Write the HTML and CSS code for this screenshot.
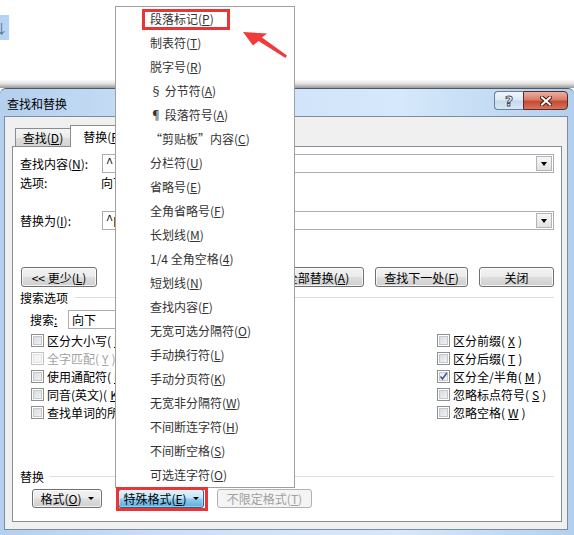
FILE: index.html
```html
<!DOCTYPE html>
<html lang="zh-CN">
<head>
<meta charset="utf-8">
<title>查找和替换</title>
<link rel="stylesheet" href="styles.css">
</head>
<body>
<div class="screen">
  <div class="doc">
    <div class="marker">↓</div>
  </div>
  <div class="shade"></div>
  <div class="dialog">
    <div class="titlebar">
      <span class="title">查找和替换</span>
      <div class="caps">
        <span class="cap help">?</span>
        <span class="cap close"><svg width="12" height="10" viewBox="0 0 12 10"><path d="M2 1.5 L10 8.5 M10 1.5 L2 8.5" stroke="#4a1a12" stroke-width="4" stroke-linecap="square"/><path d="M2 1.5 L10 8.5 M10 1.5 L2 8.5" stroke="#fff" stroke-width="2" stroke-linecap="square"/></svg></span>
      </div>
    </div>
    <div class="client">
      <div class="tabs">
        <div class="tab t1">查找(<u>D</u>)</div>
        <div class="tab active">替换(<u>P</u>)</div>
      </div>
      <div class="panel">
        <div class="field">
          <span class="lbl">查找内容(<u>N</u>):</span>
          <div class="combo"><span class="val">^l</span><span class="drop"><i></i></span></div>
        </div>
        <div class="opt"><span class="lbl lbl-o">选项:</span><span>向下</span></div>
        <div class="field field-r">
          <span class="lbl">替换为(<u>I</u>):</span>
          <div class="combo"><span class="val">^p</span><span class="drop"><i></i></span></div>
        </div>
        <div class="btnrow">
          <span class="btn b-less">&lt;&lt; 更少(<u>L</u>)</span>
          <div class="btngroup">
            <span class="btn b-w">全部替换(<u>A</u>)</span>
            <span class="btn b-w">查找下一处(<u>F</u>)</span>
            <span class="btn b-close">关闭</span>
          </div>
        </div>
        <div class="section"><span>搜索选项</span><i class="rule"></i></div>
        <div class="search"><span class="slbl">搜索<u>:</u></span><div class="select">向下</div></div>
        <div class="checks">
          <div class="col col-l">
            <label class="chk"><span class="cb"></span>区分大小写(<u>H</u>)</label>
            <label class="chk off"><span class="cb"></span>全字匹配(<u>Y</u>)</label>
            <label class="chk"><span class="cb"></span>使用通配符(<u>U</u>)</label>
            <label class="chk"><span class="cb"></span>同音(英文)(<u>K</u>)</label>
            <label class="chk"><span class="cb"></span>查找单词的所有形式(英文)(<u>W</u>)</label>
          </div>
          <div class="col">
            <label class="chk"><span class="cb"></span>区分前缀(<u>X</u>)</label>
            <label class="chk"><span class="cb"></span>区分后缀(<u>T</u>)</label>
            <label class="chk"><span class="cb on"><svg width="9" height="9" viewBox="0 0 9 9"><path d="M1.5 4.5 L3.5 7 L7.8 1" fill="none" stroke="#3a57a0" stroke-width="1.6"/></svg></span>区分全/半角(<u>M</u>)</label>
            <label class="chk"><span class="cb"></span>忽略标点符号(<u>S</u>)</label>
            <label class="chk"><span class="cb"></span>忽略空格(<u>W</u>)</label>
          </div>
        </div>
        <div class="section sec2"><span>替换</span><i class="rule"></i></div>
        <div class="fmtrow">
          <span class="btn b-fmt">格式(<u>O</u>)<b class="tri"></b></span>
          <span class="btn b-sp pressed">特殊格式(<u>E</u>)<b class="tri"></b></span>
          <span class="btn b-nl disabled">不限定格式(<u>T</u>)</span>
        </div>
      </div>
    </div>
  </div>

  <div class="menu">
    <div class="mi">段落标记(<u>P</u>)</div>
    <div class="mi">制表符(<u>T</u>)</div>
    <div class="mi">脱字号(<u>R</u>)</div>
    <div class="mi">§ 分节符(<u>A</u>)</div>
    <div class="mi">¶ 段落符号(<u>A</u>)</div>
    <div class="mi">“剪贴板”内容(<u>C</u>)</div>
    <div class="mi">分栏符(<u>U</u>)</div>
    <div class="mi">省略号(<u>E</u>)</div>
    <div class="mi">全角省略号(<u>F</u>)</div>
    <div class="mi">长划线(<u>M</u>)</div>
    <div class="mi">1/4 全角空格(<u>4</u>)</div>
    <div class="mi">短划线(<u>N</u>)</div>
    <div class="mi">查找内容(<u>F</u>)</div>
    <div class="mi">无宽可选分隔符(<u>O</u>)</div>
    <div class="mi">手动换行符(<u>L</u>)</div>
    <div class="mi">手动分页符(<u>K</u>)</div>
    <div class="mi">无宽非分隔符(<u>W</u>)</div>
    <div class="mi">不间断连字符(<u>H</u>)</div>
    <div class="mi">不间断空格(<u>S</u>)</div>
    <div class="mi">可选连字符(<u>O</u>)</div>
  </div>
  <div class="mark mark-top"></div>
  <div class="mark mark-btn"></div>
  <svg class="arrow" width="56" height="38" viewBox="236 24 56 38"><polygon points="243,32 267,33.5 262,37.5 287,55.5 285.5,58 258.5,41 253,45.5" fill="#f03b3b"/></svg>
</div>
</body>
</html>
```

FILE: styles.css
```css
* { box-sizing: border-box; margin: 0; padding: 0; }
html, body { width: 574px; height: 535px; overflow: hidden; background: #fff; }
body { font-family: "Noto Sans CJK SC", sans-serif; font-size: 12px; color: #000; }
u { text-decoration: underline; text-underline-offset: 1px; }

.screen { position: relative; width: 574px; height: 535px; overflow: hidden; }

.doc { height: 80px; display: flex; align-items: flex-start; }
.marker { margin-top: 15px; width: 9px; height: 25px; background: #b5d3f4; color: #5b6f88; font-size: 13px; line-height: 25px; overflow: hidden; text-indent: -5px; }
.shade { height: 8px; background: linear-gradient(#fbfbfb, #e2e2e2 45%, #9a9a9a); }

.dialog { height: 447px; display: flex; flex-direction: column; padding: 0 6px 5px 4px; border-top: 1px solid #4d5966; border-radius: 6px 6px 0 0; background: linear-gradient(90deg, #b4d0ee 0%, #cbe0f7 30%, #d6e8fb 70%, #b2d0ee 100%); }
.titlebar { height: 27px; flex: none; display: flex; align-items: flex-start; justify-content: space-between; }
.title { padding-left: 3px; line-height: 29px; font-size: 12px; color: #000; }
.caps { display: flex; margin-top: 2px; }
.cap { height: 19px; display: flex; align-items: center; justify-content: center; }
.help { width: 29px; border: 1px solid #6d7e93; border-right: none; border-radius: 4px 0 0 4px; background: linear-gradient(#f1f6fc, #dce8f5 48%, #c6d8ec 52%, #d9e8f7); font: bold 14px "DejaVu Sans", sans-serif; color: #fff; -webkit-text-stroke: 0.9px #3d4c60; }
.close { width: 45px; border: 1px solid #5b2a22; border-radius: 0 4px 4px 0; background: linear-gradient(#eab0a2, #d87d69 45%, #c54a33 55%, #d6745e); }

.client { flex: 1; border: 1px solid #7d8c9c; background: #f0f0f0; padding: 8px 5px 0 7px; display: flex; flex-direction: column; }

.tabs { height: 21px; flex: none; display: flex; align-items: flex-end; padding-left: 3px; position: relative; z-index: 1; }
.tab { height: 18px; border: 1px solid #898c95; border-bottom: none; background: linear-gradient(#f4f4f4, #ececec 50%, #dedede 51%, #d4d4d4); line-height: 17px; text-align: center; white-space: nowrap; }
.t1 { width: 56px; }
.tab.active { width: 66px; height: 22px; margin-bottom: -1px; margin-left: -1px; background: #fff; line-height: 21px; }

.panel { height: 376px; flex: none; border: 1px solid #898c95; background: #fff; padding: 7px 7px 0 7px; display: flex; flex-direction: column; }

.field { height: 19px; display: flex; align-items: center; }
.field-r { margin-top: 20px; }
.lbl { width: 82px; flex: none; white-space: nowrap; }
.lbl-o { width: 81px; }
.combo { flex: 1; height: 19px; border: 1px solid #abadb3; display: flex; align-items: center; justify-content: space-between; padding: 1px; }
.val { padding-left: 2px; font-family: "Liberation Mono", monospace; font-size: 12px; }
.drop { width: 16px; height: 15px; border: 1px solid #b4b4b4; background: linear-gradient(#f7f7f7, #e2e2e2); display: flex; align-items: center; justify-content: center; }
.drop i { width: 0; height: 0; border-left: 3px solid transparent; border-right: 3px solid transparent; border-top: 4px solid #000; }

.opt { height: 18px; display: flex; align-items: center; white-space: nowrap; }

.btnrow { margin-top: 37px; height: 20px; display: flex; justify-content: space-between; padding-left: 1px; }
.btngroup { display: flex; gap: 11px; }
.btn { height: 20px; flex: none; border: 1px solid #707070; border-radius: 3px; background: linear-gradient(#f3f3f3, #ebebeb 48%, #dddddd 52%, #cfcfcf); box-shadow: inset 0 0 0 1px rgba(255,255,255,.75); display: flex; align-items: center; justify-content: center; white-space: nowrap; }
.b-less { width: 76px; }
.b-w { width: 93px; }
.b-close { width: 75px; }

.section { margin-top: 2px; height: 16px; display: flex; align-items: center; white-space: nowrap; }
.section .rule { flex: 1; height: 1px; background: #d5dfe5; margin-left: 7px; }
.sec2 { margin-top: 47px; }
.sec2 .rule { margin-left: 6px; }

.search { margin-top: 5px; height: 19px; display: flex; align-items: center; padding-left: 10px; }
.slbl { width: 38px; flex: none; }
.select { width: 140px; height: 19px; border: 1px solid #abadb3; padding-left: 3px; line-height: 17px; }

.checks { margin-top: 2px; display: flex; padding-left: 11px; }
.col { display: flex; flex-direction: column; }
.col-l { width: 406px; flex: none; }
.chk { height: 18px; display: flex; align-items: center; gap: 3px; white-space: nowrap; }
.cb { width: 13px; height: 13px; flex: none; border: 1px solid #8e8f8f; background: linear-gradient(135deg, #d3d6db, #f7f7f8); box-shadow: inset 0 0 0 1px #fff, inset 0 0 0 2px #c4c8cd; display: flex; align-items: center; justify-content: center; }
.cb.on { background: linear-gradient(135deg, #e2e5ea, #fbfbfb); }
.chk.off { color: #a3a3a3; }
.chk.off .cb { border-color: #c2c2c2; background: #f4f4f4; box-shadow: inset 0 0 0 1px #fff, inset 0 0 0 2px #e2e2e2; }

.fmtrow { margin-top: 5px; height: 19px; display: flex; padding-left: 12px; }
.fmtrow .btn { height: 19px; }
.b-fmt { width: 70px; }
.b-sp { width: 86px; margin-left: 16px; }
.b-nl { width: 95px; margin-left: 13px; }
.tri { display: inline-block; margin-left: 6px; width: 0; height: 0; border-left: 3px solid transparent; border-right: 3px solid transparent; border-top: 3px solid #000; }
.btn.pressed { border-color: #2c628b; background: linear-gradient(#e3f3fc, #c6e6f8 45%, #8fcbee 55%, #5daedc); box-shadow: inset 0 0 0 1px rgba(255,255,255,.35); }
.btn.disabled { border-color: #adb2b5; background: #f4f4f4; color: #a0a0a0; box-shadow: none; }

.menu { position: absolute; z-index: 10; left: 115px; top: 6px; width: 180px; border: 1px solid #a0a0a0; background: #fff; }
.mi { height: 24px; line-height: 24px; padding-left: 34px; color: #333; font-size: 12px; white-space: nowrap; }

.mark { position: absolute; z-index: 11; border: 3px solid #ec3434; }
.mark-top { left: 142px; top: 9px; width: 88px; height: 21px; }
.mark-btn { left: 116px; top: 487px; width: 92px; height: 24px; }
.arrow { position: absolute; z-index: 11; left: 236px; top: 24px; }
```
